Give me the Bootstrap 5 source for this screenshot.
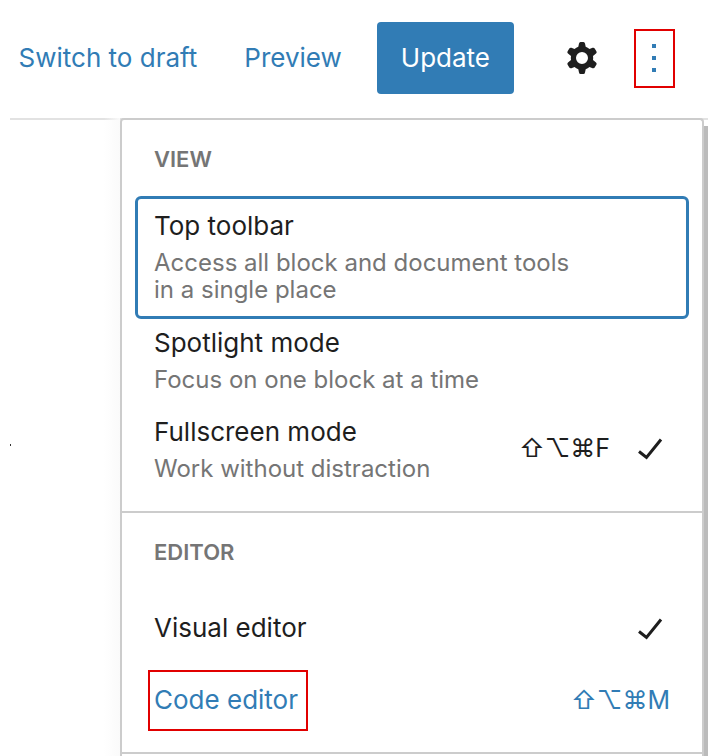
<!DOCTYPE html>
<html lang="en">
<head>
<meta charset="utf-8">
<meta name="viewport" content="width=device-width, initial-scale=1">
<title>Editor options</title>
<link rel="stylesheet" href="https://cdn.jsdelivr.net/npm/bootstrap@5.3.0/dist/css/bootstrap.min.css">
<style>
  :root { --accent: #317cb5; --ink: #1e1e1e; --muted: #757575; --line: #ccc; --flag: #e10000; }
  body { font-family: Inter, "Liberation Sans", sans-serif; font-size: 26px; line-height: 36px; color: var(--ink); background: #fff; }
  .topbar { height: 120px; margin-left: 10px; padding: 0 33px 2px 0; border-bottom: 2px solid #e2e2e2; }
  .topbar a { color: var(--accent); }
  .update-btn { height: 72px; padding: 0 24px; font-size: 26px; line-height: 36px; color: #fff; background: var(--accent); border: 0; border-radius: 4px; }
  .update-btn:hover { color: #fff; background: #286a9c; }
  .gap-links { margin-right: 47px; }
  .gap-button { margin-right: 35px; }
  .gear-btn { margin: 0 28px 0 44px; width: 48px; color: var(--ink); }
  .more-btn { width: 41px; height: 59px; border: 2px solid var(--flag); color: var(--accent); }
  .stage { margin-top: -2px; }
  .canvas-edge { width: 120px; padding: 326px 0 0 10px; background: linear-gradient(to right, transparent 104px, #fafafa 120px); }
  .canvas-edge span { display: block; width: 1px; height: 2px; background: #333; }
  .options-menu { border: 2px solid var(--line); border-bottom: 0; border-radius: 4px 4px 0 0; background: #fff; }
  .scroll-edge { width: 4px; margin-top: 8px; background: #bbb; }
  .menu-group { padding: 27px 13px 14px; border-bottom: 2px solid var(--line); }
  .group-label { margin: 0 0 25px 19px; font-size: 22px; line-height: 24px; font-weight: 600; color: var(--muted); }
  .editor-group { padding-bottom: 16px; }
  .editor-group .group-label { margin-bottom: 28px; }
  .menu-entry { width: 100%; padding: 6px 19px 15px; border: 0; background: none; color: inherit; text-align: left; }
  .menu-entry.focused { padding: 9px 16px 13px; border: 3px solid var(--accent); border-radius: 6px; }
  .menu-entry.single { height: 72px; padding-top: 0; padding-bottom: 0; }
  .hint { margin-top: 5px; max-width: 430px; font-size: 24px; line-height: 27px; color: var(--muted); }
  .keys { font-family: inherit; font-size: 25px; color: inherit; background: none; padding: 0; }
  .flagged { margin: 0 0 0 -6px; padding: 10px 8px 11px 4px; border: 2px solid var(--flag); }
  .accented { color: var(--accent); }
  .tick { margin-left: 20px; }
</style>
<script src="https://cdn.jsdelivr.net/npm/bootstrap@5.3.0/dist/js/bootstrap.bundle.min.js"></script>
</head>
<body class="d-flex flex-column min-vh-100">
<header class="topbar d-flex align-items-center justify-content-end flex-shrink-0 text-nowrap">
  <a href="#" class="text-decoration-none gap-links">Switch to draft</a>
  <a href="#" class="text-decoration-none gap-button">Preview</a>
  <button type="button" class="btn update-btn">Update</button>
  <button type="button" class="btn p-0 border-0 d-flex justify-content-center gear-btn" aria-label="Settings">
    <svg width="32" height="34" viewBox="-16 -17 32 34" aria-hidden="true">
      <path fill="currentColor" fill-rule="evenodd" d="M-3-14.500Q-2.700-16-1.500-16H1.500Q2.700-16 3-14.500L3.700-11.200Q5.800-10.500 7.500-9L10.600-10.200Q12-10.600 12.700-9.500L14.500-6.600Q15-5.400 14-4.500L11-2Q11.400 0 11 2L14 4.500Q15 5.400 14.500 6.600L12.700 9.500Q12 10.600 10.600 10.200L7.500 9Q5.800 10.500 3.700 11.200L3 14.500Q2.700 16 1.500 16H-1.500Q-2.700 16-3 14.500L-3.700 11.200Q-5.800 10.500-7.500 9L-10.600 10.200Q-12 10.600-12.700 9.500L-14.500 6.600Q-15 5.400-14 4.500L-11 2Q-11.400 0-11-2L-14-4.500Q-15-5.400-14.500-6.600L-12.700-9.500Q-12-10.600-10.600-10.200L-7.500-9Q-5.800-10.500-3.700-11.200ZM0-6A6 6 0 1 0 0 6A6 6 0 1 0 0-6Z"/>
    </svg>
  </button>
  <button type="button" class="btn p-0 rounded-0 d-flex align-items-center justify-content-center flex-shrink-0 more-btn" aria-label="Options" aria-expanded="true">
    <svg width="5" height="29" viewBox="0 0 5 29" fill="currentColor" aria-hidden="true"><path d="M0 0h4v4H0zM0 12h4v4H0zM0 24h4v4H0z"/></svg>
  </button>
</header>

<main class="stage d-flex flex-grow-1">
  <div class="canvas-edge flex-shrink-0"><span></span></div>
  <div class="options-menu flex-grow-1" role="menu" aria-label="Options">
    <section class="menu-group" role="group" aria-labelledby="view-label">
      <h2 class="group-label" id="view-label">VIEW</h2>
      <button type="button" role="menuitem" class="menu-entry focused d-block">
        <div>Top toolbar</div>
        <div class="hint">Access all block and document tools in a single place</div>
      </button>
      <button type="button" role="menuitem" class="menu-entry d-block">
        <div>Spotlight mode</div>
        <div class="hint">Focus on one block at a time</div>
      </button>
      <button type="button" role="menuitemcheckbox" aria-checked="true" class="menu-entry d-flex align-items-center">
        <div class="flex-grow-1">
          <div>Fullscreen mode</div>
          <div class="hint">Work without distraction</div>
        </div>
        <kbd class="keys">⇧⌥⌘F</kbd>
        <svg class="tick" width="40" height="24" viewBox="0 0 40 24" aria-hidden="true"><path d="M9 15.500L16.500 21.500L31 3.500" fill="none" stroke="currentColor" stroke-width="3"/></svg>
      </button>
    </section>
    <section class="menu-group editor-group" role="group" aria-labelledby="editor-label">
      <h2 class="group-label" id="editor-label">EDITOR</h2>
      <button type="button" role="menuitemradio" aria-checked="true" class="menu-entry single d-flex align-items-center">
        <span class="flex-grow-1">Visual editor</span>
        <svg class="tick" width="40" height="24" viewBox="0 0 40 24" aria-hidden="true"><path d="M9 15.500L16.500 21.500L31 3.500" fill="none" stroke="currentColor" stroke-width="3"/></svg>
      </button>
      <button type="button" role="menuitemradio" aria-checked="false" class="menu-entry single accented d-flex align-items-center justify-content-between">
        <span class="flagged">Code editor</span>
        <kbd class="keys">⇧⌥⌘M</kbd>
      </button>
    </section>
  </div>
  <div class="scroll-edge flex-shrink-0"></div>
</main>
</body>
</html>
